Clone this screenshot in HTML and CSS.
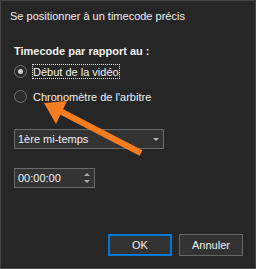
FILE: index.html
```html
<!DOCTYPE html>
<html>
<head>
<meta charset="utf-8">
<link rel="stylesheet" href="styles.css">
</head>
<body>
<div class="win">
  <div class="title">Se positionner à un timecode précis</div>
  <div class="body">
    <div class="heading">Timecode par rapport au :</div>
    <div class="radios">
      <div class="radio-row">
        <span class="radio checked"></span>
        <span class="label focus">Début de la vidéo</span>
      </div>
      <div class="radio-row">
        <span class="radio"></span>
        <span class="label">Chronomètre de l'arbitre</span>
      </div>
    </div>
    <div class="select">
      <span>1ère mi-temps</span>
      <span class="caret"></span>
    </div>
    <div class="spin">
      <span>00:00:00</span>
      <span class="arrows"><span class="up"></span><span class="down"></span></span>
    </div>
  </div>
  <div class="buttons">
    <button class="btn primary">OK</button>
    <button class="btn">Annuler</button>
  </div>
  <svg class="annot" width="256" height="269" viewBox="0 0 256 269">
    <line x1="141" y1="153" x2="58" y2="110" stroke="#f57c1f" stroke-width="6"/>
    <polygon points="44,103 67,101 56,124" fill="#f57c1f"/>
  </svg>
</div>
</body>
</html>
```
FILE: styles.css
```css
html, body {
  margin: 0;
  padding: 0;
  background: #262626;
}
.win {
  position: relative;
  width: 256px;
  height: 269px;
  box-sizing: border-box;
  border: 1px solid #444444;
  background: #262626;
  color: #f0f0f0;
  font-family: "Liberation Sans", Arial, sans-serif;
  font-size: 11px;
  line-height: 14px;
  display: flex;
  flex-direction: column;
}
.title {
  padding: 8px 0 0 9px;
  height: 14px;
}
.body {
  padding-left: 12px;
  display: flex;
  flex-direction: column;
  align-items: flex-start;
}
.heading {
  margin-top: 21px;
  font-weight: bold;
  padding-left: 1px;
}
.radios {
  margin-top: 5px;
  display: flex;
  flex-direction: column;
  gap: 8px;
}
.radio-row {
  display: flex;
  align-items: center;
  height: 17px;
}
.radio {
  width: 11px;
  height: 11px;
  margin-left: 1px;
  border: 1px solid #707070;
  border-radius: 50%;
  background: #2c2c2c;
  display: flex;
  align-items: center;
  justify-content: center;
}
.radio.checked::after {
  content: "";
  width: 5px;
  height: 5px;
  border-radius: 50%;
  background: #cfcfcf;
}
.label {
  margin-left: 5px;
  padding: 1px 0 0 0;
  height: 15px;
  box-sizing: border-box;
  border: 1px solid transparent;
  line-height: 13px;
  padding-left: 0;
}
.label.focus {
  border: 1px dotted #e8e8e8;
}
.select {
  margin-top: 24px;
  margin-left: 1px;
  width: 150px;
  height: 20px;
  box-sizing: border-box;
  border: 1px solid #6a6a6a;
  background: #333333;
  display: flex;
  align-items: center;
  justify-content: space-between;
  padding: 0 4px 0 3px;
}
.caret {
  width: 0;
  height: 0;
  border-left: 3px solid transparent;
  border-right: 3px solid transparent;
  border-top: 3px solid #b5b5b5;
}
.spin {
  margin-top: 19px;
  margin-left: 1px;
  width: 81px;
  height: 20px;
  box-sizing: border-box;
  border: 1px solid #6a6a6a;
  background: #333333;
  display: flex;
  align-items: center;
  justify-content: space-between;
  padding: 0 4px 0 3px;
}
.arrows {
  display: flex;
  flex-direction: column;
  gap: 4px;
}
.up {
  width: 0;
  height: 0;
  border-left: 3px solid transparent;
  border-right: 3px solid transparent;
  border-bottom: 3px solid #a8a8a8;
}
.down {
  width: 0;
  height: 0;
  border-left: 3px solid transparent;
  border-right: 3px solid transparent;
  border-top: 3px solid #a8a8a8;
}
.buttons {
  margin-top: auto;
  display: flex;
  justify-content: flex-end;
  gap: 7px;
  padding: 0 12px 12px 0;
}
.btn {
  width: 64px;
  height: 22px;
  box-sizing: border-box;
  border: 1px solid #666666;
  background: #333333;
  color: #f0f0f0;
  font-family: "Liberation Sans", Arial, sans-serif;
  font-size: 11px;
  padding: 0;
}
.btn.primary {
  border: 2px solid #0078d7;
}
.annot {
  position: absolute;
  left: -1px;
  top: -1px;
  pointer-events: none;
}
```
